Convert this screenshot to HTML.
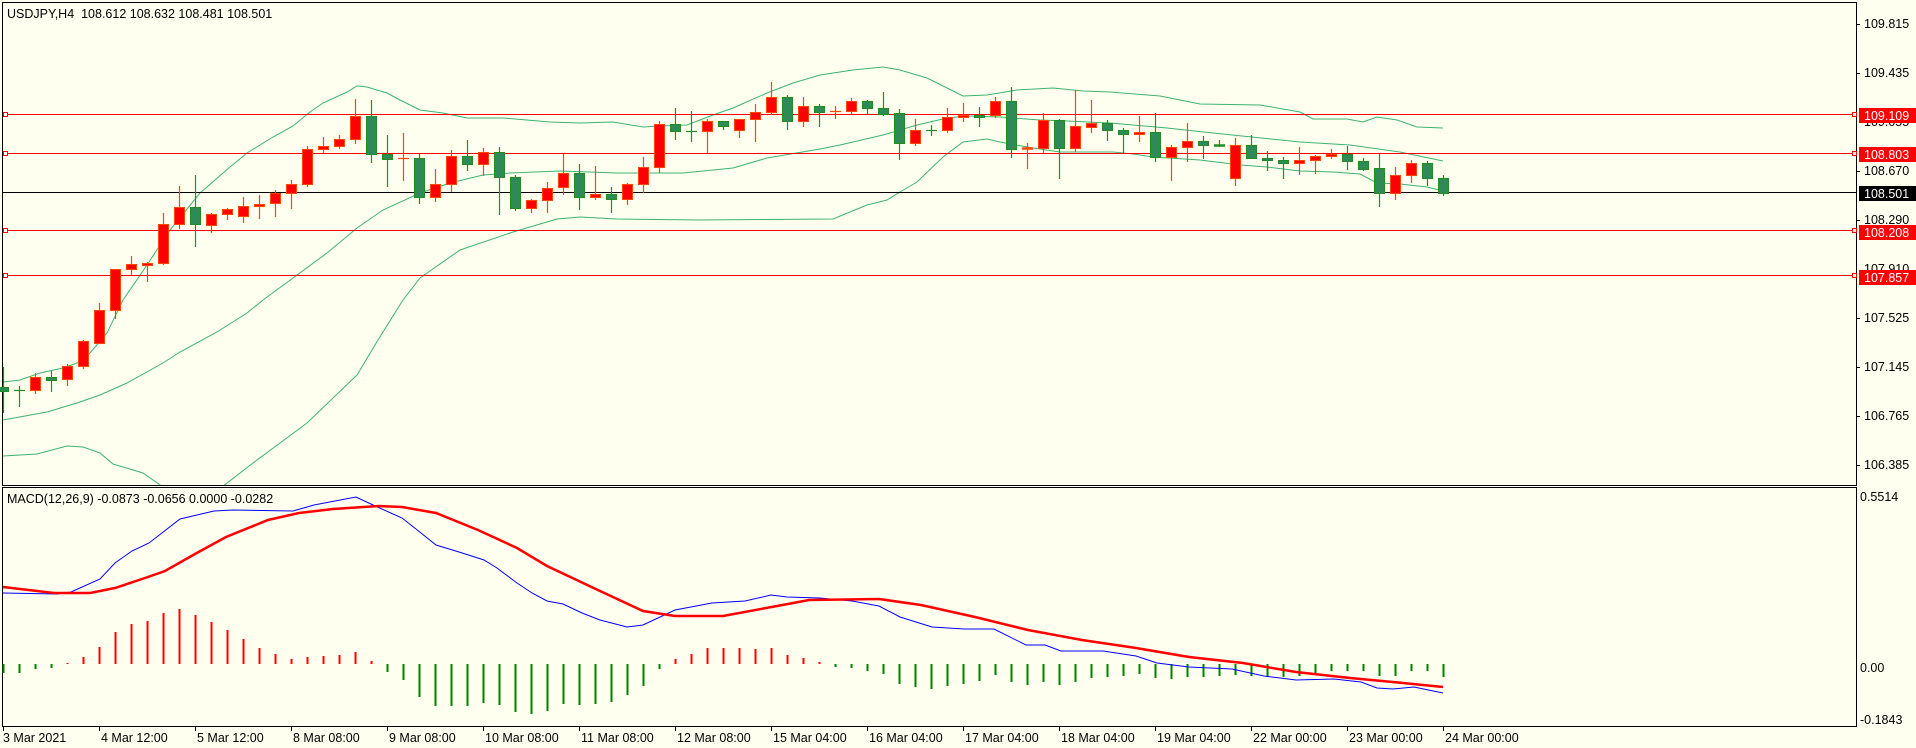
<!DOCTYPE html>
<html><head><meta charset="utf-8"><style>
html,body{margin:0;padding:0;background:#fffff0;}
svg{display:block;font-family:"Liberation Sans",sans-serif;font-size:12.5px;}
</style></head><body>
<svg id="s" width="1916" height="748" viewBox="0 0 1916 748" xmlns="http://www.w3.org/2000/svg">
<defs><clipPath id="mc"><rect x="3" y="3" width="1853" height="482"/></clipPath></defs>
<rect width="1916" height="748" fill="#fffff0"/>
<rect x="2.5" y="2.5" width="1854" height="483" fill="none" stroke="#000" stroke-width="1"/>
<rect x="2.5" y="487.5" width="1854" height="239" fill="none" stroke="#000" stroke-width="1"/>
<g fill="none" stroke="#3cb371" stroke-width="1" clip-path="url(#mc)">
<polyline points="3,382 20,380 40,373 63,368 77,363 90,353 107,333 123,300 145,268 170,230 200,193 230,167 247,153 273,137 293,126 310,112 323,103 347,92 357,86 367,87 387,93 400,100 420,110 443,113 467,118 503,118 550,122 580,123 613,122 643,127 660,126 687,125 713,115 733,108 767,93 793,83 820,75 853,70 883,67 900,70 927,78 963,96 987,95 1017,90 1053,88 1083,91 1110,92 1160,96 1200,104 1260,105 1300,112 1313,119 1347,119 1363,122 1377,117 1397,120 1417,127 1443,128"/>
<polyline points="3,420 47,412 77,403 100,395 127,383 163,363 180,352 217,332 247,313 263,300 293,278 327,253 357,228 383,210 420,193 450,183 483,175 510,173 560,171 617,173 683,173 733,168 767,158 820,149 840,145 883,135 917,125 947,118 967,116 1000,117 1040,120 1067,121 1110,123 1133,125 1167,128 1213,133 1300,142 1350,145 1400,152 1443,161"/>
<polyline points="3,456 37,454 67,446 83,447 100,453 113,464 143,473 163,487 190,495 218,490 253,463 307,423 357,375 378,340 403,300 420,278 460,250 513,232 557,219 580,217 617,219 700,220 833,219 867,205 887,200 900,192 917,182 943,157 963,142 987,139 1000,142 1033,148 1060,152 1113,152 1133,154 1153,157 1200,160 1240,165 1267,167 1300,171 1333,172 1360,174 1377,183 1400,184 1427,187 1443,191"/>
</g>
<g stroke-width="1" shape-rendering="crispEdges">
<line x1="3" x2="1856" y1="114.5" y2="114.5" stroke="#ff0000"/>
<line x1="3" x2="1856" y1="153.5" y2="153.5" stroke="#ff0000"/>
<line x1="3" x2="1856" y1="192.5" y2="192.5" stroke="#000"/>
<line x1="3" x2="1856" y1="230.5" y2="230.5" stroke="#ff0000"/>
<line x1="3" x2="1856" y1="275.5" y2="275.5" stroke="#ff0000"/>
</g>
<g fill="#fffff0" stroke="#ff0000" stroke-width="1">
<rect x="3.5" y="112.5" width="4" height="4"/><rect x="3.5" y="151.5" width="4" height="4"/>
<rect x="3.5" y="228.5" width="4" height="4"/><rect x="3.5" y="273.5" width="4" height="4"/>
<rect x="1852.5" y="112.5" width="4" height="4"/><rect x="1852.5" y="151.5" width="4" height="4"/>
<rect x="1852.5" y="228.5" width="4" height="4"/><rect x="1852.5" y="273.5" width="4" height="4"/>
</g>
<g id="candles"></g>
<g id="macd"></g>
<polyline fill="none" stroke="#0000ff" stroke-width="1" points="3,593 57,594 71,592 100,579 115,563 132,551 149,543 180,519 214,511 233,510 293,511 314,505 356,497 373,505 402,518 421,533 436,545 459,552 484,560 497,568 517,583 532,593 547,601 563,604 582,613 600,620 627,627 643,625 675,610 712,603 745,601 771,595 787,597 820,598 852,601 879,606 900,617 932,627 964,629 994,629 1026,645 1045,645 1061,651 1103,651 1136,656 1157,663 1189,667 1232,669 1264,676 1296,680 1334,679 1361,682 1377,688 1393,689 1414,687 1443,693"/>
<polyline fill="none" stroke="#ff0000" stroke-width="2.5" points="3,587 54,593 90,593 115,588 145,578 165,571 195,554 226,537 268,520 299,513 333,509 379,506 402,507 436,513 478,530 517,548 547,566 600,591 643,611 675,616 723,616 777,606 809,600 879,599 921,605 975,617 1028,630 1082,640 1136,648 1189,657 1243,663 1296,672 1350,678 1403,683 1443,687"/>
<text x="7" y="18" fill="#000">USDJPY,H4&#160;&#160;108.612 108.632 108.481 108.501</text>
<text x="7" y="503" fill="#000">MACD(12,26,9) -0.0873 -0.0656 0.0000 -0.0282</text>
<g fill="#000">
<text x="1864" y="28">109.815</text>
<text x="1864" y="77">109.435</text>
<text x="1864" y="126">109.055</text>
<text x="1864" y="175">108.670</text>
<text x="1864" y="224">108.290</text>
<text x="1864" y="273">107.910</text>
<text x="1864" y="322">107.525</text>
<text x="1864" y="371">107.145</text>
<text x="1864" y="420">106.765</text>
<text x="1864" y="469">106.385</text>
<text x="1860" y="501">0.5514</text>
<text x="1860" y="672">0.00</text>
<text x="1860" y="724">-0.1843</text>
</g>
<g stroke="#000" shape-rendering="crispEdges">
<line x1="1856" x2="1860" y1="24.5" y2="24.5"/><line x1="1856" x2="1860" y1="73.5" y2="73.5"/>
<line x1="1856" x2="1860" y1="171.5" y2="171.5"/><line x1="1856" x2="1860" y1="220.5" y2="220.5"/>
<line x1="1856" x2="1860" y1="318.5" y2="318.5"/><line x1="1856" x2="1860" y1="367.5" y2="367.5"/>
<line x1="1856" x2="1860" y1="416.5" y2="416.5"/><line x1="1856" x2="1860" y1="465.5" y2="465.5"/>
</g>
<rect x="1859" y="108" width="57" height="15" fill="#ff0000"/><text x="1864" y="120" fill="#fff">109.109</text>
<rect x="1859" y="147" width="57" height="15" fill="#ff0000"/><text x="1864" y="159" fill="#fff">108.803</text>
<rect x="1859" y="186" width="57" height="15" fill="#000"/><text x="1864" y="198" fill="#fff">108.501</text>
<rect x="1859" y="225" width="57" height="15" fill="#ff0000"/><text x="1864" y="237" fill="#fff">108.208</text>
<rect x="1859" y="270" width="57" height="15" fill="#ff0000"/><text x="1864" y="282" fill="#fff">107.857</text>
<g fill="#000">
<text x="3" y="742">3 Mar 2021</text>
<text x="101" y="742">4 Mar 12:00</text>
<text x="197" y="742">5 Mar 12:00</text>
<text x="293" y="742">8 Mar 08:00</text>
<text x="389" y="742">9 Mar 08:00</text>
<text x="485" y="742">10 Mar 08:00</text>
<text x="581" y="742">11 Mar 08:00</text>
<text x="677" y="742">12 Mar 08:00</text>
<text x="773" y="742">15 Mar 04:00</text>
<text x="869" y="742">16 Mar 04:00</text>
<text x="965" y="742">17 Mar 04:00</text>
<text x="1061" y="742">18 Mar 04:00</text>
<text x="1157" y="742">19 Mar 04:00</text>
<text x="1253" y="742">22 Mar 00:00</text>
<text x="1349" y="742">23 Mar 00:00</text>
<text x="1445" y="742">24 Mar 00:00</text>
</g>
<g id="ticks" stroke="#000" shape-rendering="crispEdges"></g>
</svg>
<script>
var NS="http://www.w3.org/2000/svg";
function el(p,t,a){var e=document.createElementNS(NS,t);for(var k in a)e.setAttribute(k,a[k]);p.appendChild(e);return e;}
var C=[[387,391,367,413,'g'],[390,390,386,407,'g'],[377,390,373,394,'r'],[377,380,371,392,'g'],[366,379,364,386,'r'],[341,366,340,369,'r'],[310,343,303,344,'r'],[269,310,269,319,'r'],[264,269,256,275,'r'],[263,265,262,282,'r'],
[224,263,213,265,'r'],[207,224,186,229,'r'],[207,224,175,247,'g'],[214,225,213,233,'r'],[209,214,208,220,'r'],[206,216,197,223,'r'],[204,206,195,219,'r'],[193,203,190,217,'r'],[184,193,180,209,'r'],[149,184,146,187,'r'],
[146,149,137,153,'r'],[139,146,135,149,'r'],[116,139,99,144,'r'],[116,154,100,163,'g'],[154,159,135,187,'g'],[158,158,133,181,'r'],[158,197,154,204,'g'],[184,197,169,202,'r'],[156,184,150,192,'r'],[156,164,140,171,'g'],
[152,164,148,176,'r'],[152,177,147,215,'g'],[177,208,175,211,'g'],[200,208,199,213,'r'],[188,200,182,213,'r'],[173,187,154,195,'r'],[173,197,164,210,'g'],[194,197,166,200,'r'],[194,199,187,213,'g'],[184,199,183,205,'r'],
[167,184,157,193,'r'],[124,167,121,173,'r'],[124,131,108,140,'g'],[131,131,111,142,'g'],[121,131,119,153,'r'],[121,126,121,130,'g'],[119,130,119,138,'r'],[112,119,104,142,'r'],[97,112,82,115,'r'],[97,121,95,130,'g'],
[106,121,97,127,'r'],[106,112,104,127,'g'],[111,111,106,119,'r'],[101,111,98,114,'r'],[101,108,100,114,'g'],[108,114,92,116,'g'],[113,143,109,160,'g'],[130,143,119,146,'r'],[130,130,125,136,'g'],[117,130,108,133,'r'],
[115,117,103,122,'r'],[115,117,107,127,'g'],[101,115,97,118,'r'],[101,149,87,158,'g'],[148,149,143,169,'r'],[120,148,113,153,'r'],[120,148,119,179,'g'],[126,148,90,152,'r'],[123,127,100,133,'r'],[123,130,120,141,'g'],
[130,134,128,153,'g'],[132,134,116,142,'r'],[132,157,113,162,'g'],[147,157,145,181,'r'],[141,147,123,162,'r'],[141,145,136,159,'g'],[145,146,140,147,'g'],[145,178,138,186,'r'],[145,158,135,158,'g'],[158,160,151,171,'g'],
[160,163,157,179,'g'],[160,163,147,175,'r'],[156,160,155,174,'r'],[154,156,149,159,'r'],[154,161,146,170,'g'],[161,169,158,171,'g'],[168,193,154,207,'g'],[175,193,167,200,'r'],[163,175,160,183,'r'],[163,178,161,186,'g'],[178,193,175,196,'g']];
var g=document.getElementById('candles');
C.forEach(function(c,k){var x=3+16*k;var r=c[4]=='r';var st=r?'#ff4500':'#228b22';var fi=r?'#ff0000':'#2e8b57';
 el(g,'line',{x1:x+.5,x2:x+.5,y1:c[2],y2:c[3],stroke:st,'stroke-width':1.2});
 var h=c[1]-c[0];
 if(h<2){el(g,'line',{x1:x-5,x2:x+6,y1:c[0]+.5,y2:c[0]+.5,stroke:st,'stroke-width':h<1?1.2:2.5});}
 else el(g,'rect',{x:x-4.5,y:c[0]+.5,width:10,height:h,fill:fi,stroke:st,'stroke-width':1});
});
var H=[673,673,669,668,663,657,647,632,624,621,613,609,615,622,630,639,648,654,659,657,656,655,652,661,672,680,697,706,706,706,703,705,712,714,711,704,705,704,702,695,686,669,659,654,648,648,648,649,648,655,658,662,667,668,671,674,684,687,689,686,684,681,675,682,685,682,685,682,678,677,676,674,678,679,677,677,676,675,676,677,677,676,674,671,671,671,676,676,671,671,677];
var m=document.getElementById('macd');var z=664;
H.forEach(function(y,k){var x=3+16*k;var col=y<z?'#ff0000':'#008000';
 el(m,'rect',{x:x-0.5,y:Math.min(y,z),width:2,height:Math.max(Math.abs(y-z),1),fill:col});});
var t=document.getElementById('ticks');
for(var i=0;i<16;i++){var x=(i==0?3:3+96*i)+0.5;el(t,'line',{x1:x,x2:x,y1:727,y2:731});}
</script>
</body></html>
